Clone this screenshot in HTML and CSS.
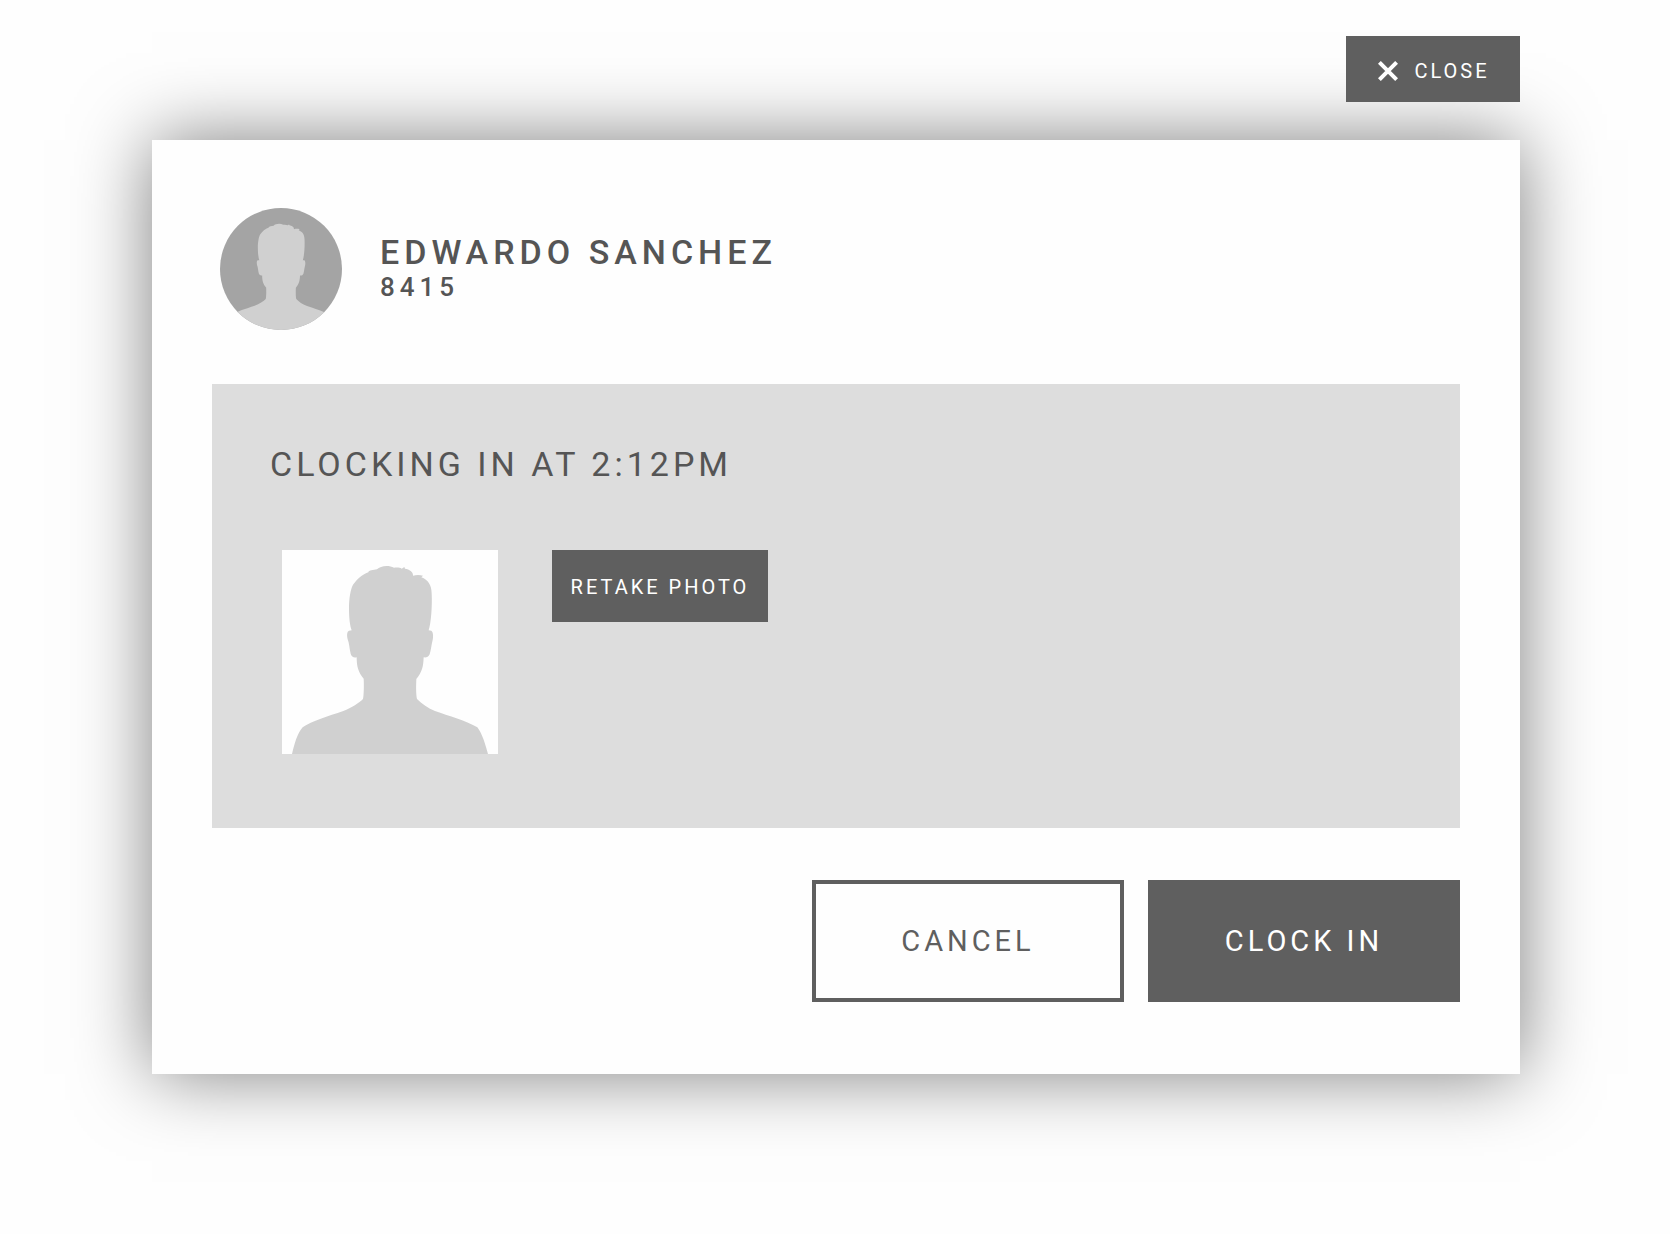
FILE: index.html
```html
<!DOCTYPE html>
<html lang="en">
<head>
<meta charset="utf-8">
<meta name="viewport" content="width=device-width, initial-scale=1">
<title>Clock In</title>
<link rel="stylesheet" href="styles.css">
</head>
<body>
<svg class="defs" aria-hidden="true">
  <symbol id="person" viewBox="36 -6 648 648">
    <path d="M66 642C73 612 82 580 98 562C125 543 175 528 220 513C245 504 268 488 279 477C282 465 282 430 281 416C265 397 260 380 260 352C250 354 245 350 242 341C238 325 238 310 233 298C230 285 231 274 237 272L245 271C240 258 237 235 237 205C237 175 242 145 250 133C262 118 275 104 295 97C296 91 310 90 321 88C330 78 355 74 372 83C380 82 390 82 395 86L403 81L405 86C418 88 430 95 429 107C438 104 450 104 459 107L454 112C475 120 484 135 485 160C487 200 483 250 476 271L484 272C490 276 490 290 488 300C484 315 483 330 479 343C475 352 468 353 461 352C460 380 456 397 439 417C438 440 438 465 441 477C455 492 475 505 495 513C535 527 590 543 622 562C636 580 646 612 654 642Z"/>
  </symbol>
</svg>
<div class="page">
  <button class="btn btn-close" type="button">
    <svg class="close-icon" viewBox="0 0 20 20" aria-hidden="true"><path d="M1.4 1.4L18.6 18.6M18.6 1.4L1.4 18.6"/></svg>
    Close
  </button>
  <main class="card">
    <header class="employee">
      <svg class="avatar" role="img" aria-label="Profile picture"><use href="#person"/></svg>
      <div class="identity">
        <h1 class="name">Edwardo Sanchez</h1>
        <p class="number">8415</p>
      </div>
    </header>
    <section class="panel">
      <h2 class="status">Clocking in at 2:12PM</h2>
      <div class="capture">
        <div class="photo"><svg class="photo-person" role="img" aria-label="Captured photo"><use href="#person"/></svg></div>
        <button class="btn btn-retake" type="button">Retake photo</button>
      </div>
    </section>
    <footer class="actions">
      <button class="btn btn-large btn-outline" type="button">Cancel</button>
      <button class="btn btn-large" type="button">Clock in</button>
    </footer>
  </main>
</div>
</body>
</html>
```

FILE: styles.css
```css
* {
  box-sizing: border-box;
}

body {
  margin: 0;
  background: #fefefe;
  color: #555;
  font-family: Roboto, "Liberation Sans", sans-serif;
}

h1, h2, p {
  margin: 0;
}

.defs {
  position: absolute;
  width: 0;
  height: 0;
}

.page {
  display: flex;
  flex-direction: column;
  align-items: flex-end;
  gap: 38px;
  padding: 36px 150px 160px 152px;
}

.btn {
  display: flex;
  align-items: center;
  justify-content: center;
  padding: 2px 0 0;
  border: 0;
  background: #5f5f5f;
  color: #fff;
  font: 400 20px/24px Roboto, "Liberation Sans", sans-serif;
  letter-spacing: 3px;
  text-transform: uppercase;
  cursor: pointer;
}

.btn-close {
  position: relative;
  z-index: 1;
  gap: 16px;
  width: 174px;
  height: 66px;
  padding: 4px 0 0 2px;
}

.close-icon {
  width: 20px;
  height: 20px;
  fill: none;
  stroke: #fff;
  stroke-width: 4;
}

.card {
  width: 100%;
  padding: 68px 60px 72px;
  background: #fefefe;
  box-shadow: 0 0 72px rgba(0, 0, 0, 0.5);
}

.employee {
  display: flex;
  align-items: center;
  gap: 38px;
  padding-left: 8px;
}

.avatar {
  width: 122px;
  height: 122px;
  border-radius: 50%;
  background: #a4a4a4;
  fill: #d0d0d0;
}

.identity {
  padding-bottom: 4px;
}

.name {
  font-size: 34px;
  font-weight: 500;
  line-height: 40px;
  letter-spacing: 5px;
  text-transform: uppercase;
}

.number {
  font-size: 26px;
  font-weight: 500;
  line-height: 30px;
  letter-spacing: 5px;
}

.panel {
  margin-top: 54px;
  padding: 60px 58px 74px;
  background: #ddd;
}

.status {
  font-size: 34px;
  font-weight: 400;
  line-height: 40px;
  letter-spacing: 4px;
  text-transform: uppercase;
}

.capture {
  display: flex;
  align-items: flex-start;
  gap: 54px;
  margin-top: 66px;
  padding-left: 12px;
}

.photo {
  display: flex;
  align-items: flex-end;
  width: 216px;
  height: 204px;
  overflow: hidden;
  background: #fefefe;
}

.photo-person {
  flex: none;
  width: 216px;
  height: 216px;
  fill: #d0d0d0;
}

.btn-retake {
  width: 216px;
  height: 72px;
}

.actions {
  display: flex;
  justify-content: flex-end;
  gap: 24px;
  margin-top: 52px;
}

.btn-large {
  width: 312px;
  height: 122px;
  padding: 0;
  font-size: 29px;
  line-height: 32px;
  letter-spacing: 4px;
}

.btn-outline {
  border: 4px solid #5f5f5f;
  background: #fefefe;
  color: #5f5f5f;
}
```
